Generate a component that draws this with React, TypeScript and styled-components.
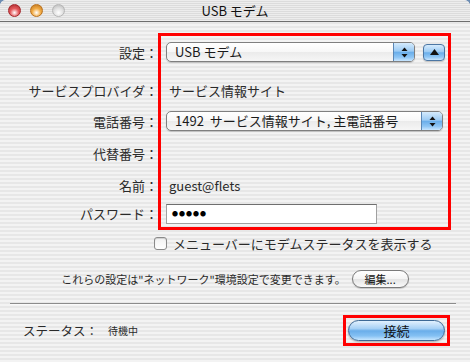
import React from "react";
import styled, { createGlobalStyle } from "styled-components";

const GlobalStyle = createGlobalStyle`
  html, body {
    margin: 0;
    padding: 0;
    background: #6d8db3;
    overflow: hidden;
  }
`;

const stripes = `repeating-linear-gradient(
  to bottom,
  #f3f3f3 0px,
  #f3f3f3 2px,
  #e7e7e7 2px,
  #e7e7e7 4px
)`;

const Window = styled.div`
  width: 470px;
  height: 362px;
  display: flex;
  flex-direction: column;
  background: ${stripes};
  border-radius: 6px 6px 0 0;
  overflow: hidden;
  font-family: "Noto Sans CJK JP", sans-serif;
  color: #111;
`;

const TitleBar = styled.div`
  height: 21px;
  display: grid;
  grid-template-columns: 1fr auto 1fr;
  align-items: center;
  padding: 0 8px;
  border-bottom: 1px solid #6e6e6e;
  background: repeating-linear-gradient(
    to bottom,
    #ededed 0px,
    #ededed 1px,
    #dcdcdc 1px,
    #dcdcdc 2px
  );
`;

const Lights = styled.div`
  display: flex;
  gap: 9px;
`;

const Light = styled.span<{ $c: string; $e: string }>`
  width: 13px;
  height: 13px;
  border-radius: 50%;
  box-sizing: border-box;
  border: 1px solid ${(p) => p.$e};
  background: radial-gradient(
    circle at 50% 70%,
    #ffffff 0%,
    ${(p) => p.$c} 45%,
    ${(p) => p.$e} 100%
  );
`;

const Title = styled.div`
  font-size: 13px;
  line-height: 21px;
`;

const Body = styled.div`
  display: flex;
  flex-direction: column;
  padding-top: 11px;
`;

const Form = styled.div`
  display: grid;
  grid-template-columns: 158px 293px;
  grid-template-rows: 38px 38px 24px 40px 24px 33px;
`;

const Label = styled.div<{ $row: number }>`
  grid-column: 1;
  grid-row: ${(p) => p.$row};
  display: flex;
  align-items: center;
  justify-content: flex-end;
  font-size: 13px;
  color: #2a2a2a;
`;

const Value = styled.div<{ $row: number }>`
  grid-column: 2;
  grid-row: ${(p) => p.$row};
  display: flex;
  align-items: center;
  gap: 8px;
  padding-left: 8px;
  font-size: 13px;
  color: #2a2a2a;
`;

const Highlight = styled.div`
  grid-column: 2;
  grid-row: 1 / -1;
  border: 3px solid #ff0000;
  pointer-events: none;
  z-index: 1;
`;

const PlainText = styled.span`
  padding-left: 3px;
`;

const Popup = styled.div<{ $w: number }>`
  width: ${(p) => p.$w}px;
  height: 20px;
  box-sizing: border-box;
  display: flex;
  border: 1px solid #7f7f7f;
  border-radius: 5px;
  overflow: hidden;
  background: linear-gradient(
    to bottom,
    #ffffff 0%,
    #f7f7f7 50%,
    #ebebeb 52%,
    #f6f6f6 100%
  );
  box-shadow: 0 1px 1px rgba(0, 0, 0, 0.18);
`;

const PopupText = styled.span`
  flex: 1;
  padding-left: 8px;
  font-size: 13px;
  line-height: 18px;
  white-space: pre;
  color: #1a1a1a;
`;

const aqua = `linear-gradient(
  to bottom,
  #d5ebfd 0%,
  #9ccbf4 45%,
  #6aaeea 52%,
  #8fc6f5 80%,
  #c9e6ff 100%
)`;

const Stepper = styled.span`
  width: 20px;
  border-left: 1px solid #5b87b5;
  background: ${aqua};
  display: flex;
  align-items: center;
  justify-content: center;
`;

const UpButton = styled.span`
  width: 22px;
  height: 17px;
  box-sizing: border-box;
  border: 1px solid #4c76a3;
  border-radius: 4px;
  background: ${aqua};
  display: flex;
  align-items: center;
  justify-content: center;
  box-shadow: 0 1px 1px rgba(0, 0, 0, 0.2);
`;

const Field = styled.div`
  width: 211px;
  height: 20px;
  box-sizing: border-box;
  background: #fff;
  border: 1px solid #a0a0a0;
  border-top-color: #6f6f6f;
  display: flex;
  align-items: center;
  padding-left: 5px;
`;

const Dots = styled.span`
  font-size: 6px;
  line-height: 6px;
  letter-spacing: 1px;
  color: #000;
`;

const CheckRow = styled.label`
  margin-top: 5px;
  height: 16px;
  padding-left: 154px;
  display: flex;
  align-items: center;
  gap: 6px;
  font-size: 13px;
  color: #2a2a2a;
`;

const Checkbox = styled.span`
  width: 13px;
  height: 13px;
  box-sizing: border-box;
  border: 1px solid #8a8a8a;
  border-radius: 3px;
  background: linear-gradient(to bottom, #f2f2f2, #ffffff);
  box-shadow: inset 0 1px 1px rgba(0, 0, 0, 0.15);
`;

const InfoRow = styled.div`
  margin-top: 19px;
  height: 18px;
  display: flex;
  justify-content: center;
  align-items: center;
  gap: 6px;
  font-size: 11px;
  color: #2a2a2a;
`;

const PillButton = styled.button`
  width: 57px;
  height: 18px;
  padding: 0;
  border: 1px solid #7a7a7a;
  border-radius: 9px;
  background: linear-gradient(
    to bottom,
    #ffffff 0%,
    #f4f4f4 50%,
    #e4e4e4 52%,
    #fafafa 100%
  );
  font-family: "Noto Sans CJK JP", sans-serif;
  font-size: 11px;
  line-height: 16px;
  color: #111;
  box-shadow: 0 1px 1px rgba(0, 0, 0, 0.18);
`;

const Separator = styled.div`
  margin: 15px 14px 0 10px;
  height: 1px;
  background: #8c8c8c;
  box-shadow: 0 1px 0 #fafafa;
`;

const StatusRow = styled.div`
  margin-top: 11px;
  padding: 0 20px 0 23px;
  display: flex;
  align-items: center;
  justify-content: space-between;
`;

const Status = styled.div`
  display: flex;
  align-items: center;
  gap: 10px;
  font-size: 12.5px;
  color: #2a2a2a;
`;

const StatusValue = styled.span`
  font-size: 10px;
`;

const ButtonMark = styled.div`
  border: 3px solid #ff0000;
  padding: 2px;
  display: flex;
`;

const ConnectButton = styled.button`
  width: 97px;
  height: 21px;
  padding: 0;
  border: 1px solid #3d6996;
  border-radius: 11px;
  background: linear-gradient(
    to bottom,
    #e2f1fe 0%,
    #a6d0f5 40%,
    #6aaeea 52%,
    #84c0f3 78%,
    #c6e6ff 100%
  );
  font-family: "Noto Sans CJK JP", sans-serif;
  font-size: 13px;
  line-height: 19px;
  color: #111;
  box-shadow: 0 1px 2px rgba(0, 0, 0, 0.3);
`;

const UpDown = () => (
  <svg width="7" height="11" viewBox="0 0 7 11">
    <path d="M3.5 0.5 L6.5 4 L0.5 4 Z" fill="#111" />
    <path d="M3.5 10.5 L6.5 7 L0.5 7 Z" fill="#111" />
  </svg>
);

const UpArrow = () => (
  <svg width="9" height="6" viewBox="0 0 9 6">
    <path d="M4.5 0 L9 6 L0 6 Z" fill="#111" />
  </svg>
);

export default function App() {
  return (
    <Window>
      <GlobalStyle />
      <TitleBar>
        <Lights>
          <Light $c="#e5595c" $e="#a3262a" />
          <Light $c="#f2ac45" $e="#b9701d" />
          <Light $c="#e2e2e2" $e="#b4b4b4" />
        </Lights>
        <Title>USB モデム</Title>
        <span />
      </TitleBar>
      <Body>
        <Form>
          <Label $row={1}>設定：</Label>
          <Value $row={1}>
            <Popup $w={249}>
              <PopupText>USB モデム</PopupText>
              <Stepper>
                <UpDown />
              </Stepper>
            </Popup>
            <UpButton>
              <UpArrow />
            </UpButton>
          </Value>
          <Label $row={2}>サービスプロバイダ：</Label>
          <Value $row={2}>
            <PlainText>サービス情報サイト</PlainText>
          </Value>
          <Label $row={3}>電話番号：</Label>
          <Value $row={3}>
            <Popup $w={277}>
              <PopupText>1492  サービス情報サイト, 主電話番号</PopupText>
              <Stepper>
                <UpDown />
              </Stepper>
            </Popup>
          </Value>
          <Label $row={4}>代替番号：</Label>
          <Value $row={4} />
          <Label $row={5}>名前：</Label>
          <Value $row={5}>
            <PlainText>guest@flets</PlainText>
          </Value>
          <Label $row={6}>パスワード：</Label>
          <Value $row={6}>
            <Field>
              <Dots>●●●●●</Dots>
            </Field>
          </Value>
          <Highlight />
        </Form>
        <CheckRow>
          <Checkbox />
          メニューバーにモデムステータスを表示する
        </CheckRow>
        <InfoRow>
          これらの設定は"ネットワーク"環境設定で変更できます。
          <PillButton>編集...</PillButton>
        </InfoRow>
        <Separator />
        <StatusRow>
          <Status>
            ステータス：
            <StatusValue>待機中</StatusValue>
          </Status>
          <ButtonMark>
            <ConnectButton>接続</ConnectButton>
          </ButtonMark>
        </StatusRow>
      </Body>
    </Window>
  );
}
